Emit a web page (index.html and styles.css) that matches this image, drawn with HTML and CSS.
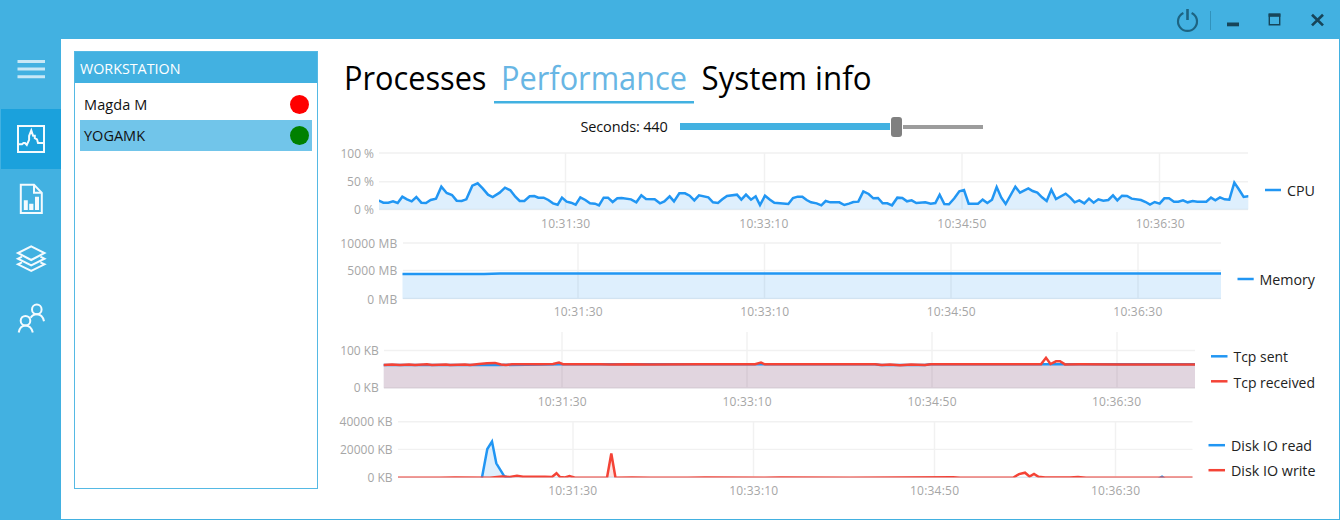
FILE: index.html
```html
<!DOCTYPE html>
<html lang="en">
<head>
<meta charset="utf-8">
<title>Workstation monitor</title>
<link rel="stylesheet" href="styles.css">
</head>
<body>
<div class="window">
  <header class="titlebar">
    <svg width="160" height="39" viewBox="1170 0 160 39">
      <g fill="none" stroke="#1d6482" stroke-width="2.2"><path d="M1183.4 12.9A9.5 9.5 0 1 0 1191.6 12.9"/><path d="M1187.5 9V20" stroke-width="2.6"/></g>
      <path d="M1210.5 11V30" stroke="#3192bb" fill="none"/>
      <path d="M1227 22.5h12v3.8h-12z" fill="#174559"/>
      <path d="M1269.3 14.3h10.4v10.4h-10.4z" fill="none" stroke="#174559" stroke-width="1.4"/>
      <path d="M1268.6 13.6h11.8v3.2h-11.8z" fill="#174559"/>
      <path d="M1312 14.8l11 10.6M1323 14.8l-11 10.6" fill="none" stroke="#174559" stroke-width="2.7"/>
    </svg>
  </header>
  <nav class="sidebar">
    <a class="item"><svg viewBox="0 0 60 60"><path d="M16.5 22.5h27.5M16.5 30.1h27.5M16.5 37.7h27.5" stroke="#c8e8f6" stroke-width="3"/></svg></a>
    <a class="item active"><svg viewBox="0 0 60 60"><path d="M17 17h26v26H17z"/><path d="M18 35.3h3l1.5-1.3h1.5l1.8 2 2.3-5.2V27l2.2-5.5 1.8 5.3h1.7v2.3l2.2 1.2 1 3.7h5"/></svg></a>
    <a class="item"><svg viewBox="0 0 60 60"><path d="M19.8 15.8H33l7.8 8v20.3h-21z"/><path d="M33 15.8v8h7.8"/><path class="solid" d="M22.8 31.3h4v9.7h-4zM28.2 34.8h4.2v6.2h-4.2zM34 27.7h4v13.3h-4z"/></svg></a>
    <a class="item"><svg viewBox="0 0 60 60"><path d="M30.2 17.3l13.3 6.7-13.3 7-13.3-7z"/><path d="M21 27.6l-4.1 2.1 13.3 6.7 13.3-6.7-4.1-2.1M21 33.3l-4.1 2 13.3 6.7 13.3-6.7-4.1-2"/></svg></a>
    <a class="item"><svg viewBox="0 0 60 60"><circle cx="35.8" cy="20.4" r="4.8"/><circle cx="24.5" cy="31.7" r="4.8"/><path d="M17.7 43.5q1.3-7 6.8-7t7.3 7M29.6 28.7q2.2-3.5 6.2-3.5 5.7 0 7.2 7"/></svg></a>
  </nav>
  <main class="content">
    <section class="list">
      <h2 class="list-head">WORKSTATION</h2>
      <div class="rows">
        <div class="row"><span class="magda">Magda M</span><i class="dot red"></i></div>
        <div class="row selected"><span class="yoga">YOGAMK</span><i class="dot green"></i></div>
      </div>
    </section>
    <section class="panel">
      <div class="tabs">
        <svg width="640" height="54" viewBox="335 51 640 54">
          <text x="344" y="90.4" textLength="142.5" lengthAdjust="spacingAndGlyphs">Processes</text>
          <text class="current" x="501" y="90.4" textLength="186" lengthAdjust="spacingAndGlyphs">Performance</text>
          <text x="701.5" y="90.4" textLength="170" lengthAdjust="spacingAndGlyphs">System info</text>
          <path d="M494 101h200v2.5H494z" fill="#42b1e1"/>
        </svg>
      </div>
      <div class="seconds">
        <span class="seconds-label">Seconds: 440</span>
        <div class="slider"><i class="done"></i><i class="thumb"></i><i class="rest"></i></div>
      </div>

      <svg class="chart" viewBox="335 145 995 90" height="90">
        <clipPath id="cpu-plot"><path d="M379 145H1248.3V209.6H379z"/></clipPath>
        <path class="grid" d="M379 153H1248M379 181.8H1248M379 209.5H1248M565.5 153V209M764.5 153V209M962 153V209M1159.5 153V209"/>
        <g clip-path="url(#cpu-plot)"><g transform="translate(335 145) scale(.33333)">
          <path class="blue filled" d="M120 206V167H132L145 173 160 173 174 169 188 174 202 155 216 163 230 169 244 156 259 173 273 174 287 165 303 161 319 125 335 144 351 150 365 167 380 168 394 163 412 122 428 115 443 130 459 149 473 156 494 143 510 128 526 136 541 155 554 168 568 168 584 154 598 153 610 158 626 158 640 165 654 175 668 179 681 158 695 170 708 173 722 179 736 157 751 165 765 175 780 176 792 181 806 158 819 158 833 171 847 160 860 159 888 163 904 172 919 151 933 162 959 163 975 175 988 169 1004 154 1017 169 1033 145 1050 145 1064 152 1078 166 1092 151 1120 157 1134 172 1149 174 1162 163 1176 153 1206 149 1219 164 1233 149 1248 164 1262 154 1275 180 1290 152 1305 164 1318 173 1360 177 1374 159 1388 155 1402 155 1415 165 1428 172 1445 175 1459 181 1472 168 1486 172 1513 172 1528 180 1542 176 1555 171 1570 170 1585 139 1601 147 1615 160 1629 159 1643 175 1657 175 1671 181 1687 158 1702 159 1716 169 1730 166 1744 174 1771 172 1787 176 1801 174 1814 149 1828 177 1842 178 1858 160 1873 139 1887 135 1901 176 1929 176 1943 164 1957 174 1971 164 1985 126 1999 158 2012 177 2041 125 2055 143 2080 130 2093 138 2107 143 2121 157 2135 168 2149 134 2163 162 2192 146 2206 158 2219 172 2233 166 2248 175 2262 161 2276 173 2290 163 2305 167 2320 165 2334 151 2347 166 2361 152 2376 153 2390 161 2418 165 2432 171 2445 179 2459 171 2474 176 2488 160 2502 160 2517 170 2530 170 2544 166 2558 172 2573 168 2587 170 2614 170 2628 158 2641 166 2655 157 2669 163 2683 164 2698 113 2711 132 2726 156 2739 154H2751V206Z"/>
        </g></g>
        <g class="axis end"><text x="374" y="157.6" textLength="33.5">100 %</text><text x="374" y="186" textLength="27">50 %</text><text x="374" y="214" textLength="20">0 %</text></g>
        <g class="axis"><text x="565.6" y="227.6" textLength="49">10:31:30</text><text x="763.8" y="227.6" textLength="49">10:33:10</text><text x="961.8" y="227.6" textLength="49">10:34:50</text><text x="1160.2" y="227.6" textLength="49">10:36:30</text></g>
        <path class="blue" d="M1265 190H1281"/>
        <text class="legend" x="1287" y="196" textLength="28" lengthAdjust="spacingAndGlyphs">CPU</text>
      </svg>

      <svg class="chart" viewBox="335 235 995 90" height="90">
        <path class="grid" d="M403 243H1221M403 270.5H1221M403 298.5H1221M578 243V298M764.5 243V298M951 243V298M1138 243V298"/>
        <path class="blue-area" d="M402.5 273.7H1221V299H402.5z"/>
        <path class="blue" d="M402.5 273.9H484L500 273.5H1221"/>
        <g class="axis end"><text x="397.2" y="247.6" textLength="57">10000 MB</text><text x="397.2" y="275.3" textLength="50">5000 MB</text><text x="397.2" y="304" textLength="30">0 MB</text></g>
        <g class="axis"><text x="578.2" y="316.3" textLength="49">10:31:30</text><text x="764.7" y="316.3" textLength="49">10:33:10</text><text x="951.2" y="316.3" textLength="49">10:34:50</text><text x="1137.8" y="316.3" textLength="49">10:36:30</text></g>
        <path class="blue" d="M1237.5 279H1253.7"/>
        <text class="legend" x="1259.5" y="285" textLength="55.5" lengthAdjust="spacingAndGlyphs">Memory</text>
      </svg>

      <svg class="chart" viewBox="335 325 995 89" height="89">
        <path class="grid" d="M384 350.5H1195M384 388H1195M562 332V388M747 332V388M932 332V388M1117 332V388"/>
        <path class="blue-area" d="M383.7 364.7L562 364.3H1195V388.3H383.7z"/>
        <path class="red-area" d="M383.7 364.7L562 364.3H1195V388.3H383.7z"/>
        <path class="blue" d="M383.7 365H500L562 364.2H875L880 365H925L930 364.2H1195"/>
        <path class="red" d="M383.7 365L392 364.6 400 365 409 364.4 415 365 427 364.3 432 365 446 364.4 450 365 465 364.4 470 365 479 364 487 363.3 495 362.9 501 364.5 506 365.1 512 364.2 540 364.2 553 364 559 362.6 563 364.2H600L610 364.5 630 364.2 650 364.5 700 364.2 755 364.3 761 362.6 765 364.3 875 364.2 882 365.1 890 364.5 900 365.2 911 364.5 925 365 931 364.3H1041L1046 357.8 1050.5 364 1056 361.3H1060L1065 364.4 1080 364.2 1120 364.4 1195 364.5"/>
        <g class="axis end"><text x="378.7" y="354.8" textLength="38.5">100 KB</text><text x="378.7" y="392.3" textLength="25">0 KB</text></g>
        <g class="axis"><text x="562.2" y="406.3" textLength="49">10:31:30</text><text x="747" y="406.3" textLength="49">10:33:10</text><text x="932" y="406.3" textLength="49">10:34:50</text><text x="1116.5" y="406.3" textLength="49">10:36:30</text></g>
        <path class="blue" d="M1211 356.3H1227.5"/><path class="red" d="M1211 381.3H1227.5"/>
        <text class="legend" x="1233.5" y="362.4" textLength="54.5" lengthAdjust="spacingAndGlyphs">Tcp sent</text>
        <text class="legend" x="1233.5" y="387.6" textLength="81.5" lengthAdjust="spacingAndGlyphs">Tcp received</text>
      </svg>

      <svg class="chart" viewBox="335 414 995 90" height="90">
        <clipPath id="disk-plot"><path d="M398 414H1193V477.6H398z"/></clipPath>
        <path class="grid" d="M398 421.7H1192.5M398 449.4H1192.5M398 477H1192.5M573 422V477M753.5 422V477M934.5 422V477M1115.5 422V477"/>
        <g clip-path="url(#disk-plot)">
          <path class="blue-area" d="M481.7 478L487.3 449 492 441.5 496.3 463.3 504.3 476.5 507 478z"/>
          <path class="blue" d="M398 479H481.7L487.3 449 492 441.5 496.3 463.3 504.3 476.3 512 479H1158L1162 476.8 1165 479H1192.5"/>
          <path class="red-area" d="M607.3 477L611.3 453.5 615.5 477z"/>
          <path class="red" d="M398 477.8H440L455 477.5 490 477.8 502 476.6 510 477 517 475.7 523 476.8H545L552 477 556.5 473.2 560 477 565 477.5 569.5 476.1 575 477.7H607L611.3 453.5 615.5 477.7 632 477.5 650 477.8H688L705 477.4 765 477.7 780 477.4 850 477.7 953 477.2 960 477.7H1013L1019 474.1 1025 472.7 1029.5 476.5 1034 473.9 1038.5 476.7 1045 477.6H1070L1078 477 1086 477.8H1192.5"/>
        </g>
        <g class="axis end"><text x="392.5" y="426" textLength="53">40000 KB</text><text x="392.5" y="453.8" textLength="52.5">20000 KB</text><text x="392.5" y="482.3" textLength="25">0 KB</text></g>
        <g class="axis"><text x="572.7" y="495" textLength="49">10:31:30</text><text x="753.7" y="495" textLength="49">10:33:10</text><text x="934.5" y="495" textLength="49">10:34:50</text><text x="1115.5" y="495" textLength="49">10:36:30</text></g>
        <path class="blue" d="M1208.5 445.2H1225"/><path class="red" d="M1208.5 470.2H1225"/>
        <text class="legend" x="1231" y="451" textLength="81" lengthAdjust="spacingAndGlyphs">Disk IO read</text>
        <text class="legend" x="1231" y="476" textLength="84.5" lengthAdjust="spacingAndGlyphs">Disk IO write</text>
      </svg>
    </section>
  </main>
</div>
</body>
</html>
```
FILE: styles.css
```css
* { box-sizing: border-box; }
body { margin: 0; font-family: "Open Sans", "Noto Sans", sans-serif; color: #111; }
.window { width: 1340px; height: 520px; background: #42b1e1; display: grid; grid-template: 39px 1fr / 61px 1fr; overflow: hidden; }
.titlebar { grid-column: 1 / 3; display: flex; justify-content: flex-end; padding-right: 10px; }
.sidebar { display: flex; flex-direction: column; padding-left: 1px; }
.item { height: 60px; flex: none; }
.item:first-child { height: 70px; }
.item svg { display: block; width: 60px; height: 60px; fill: none; stroke: #f4fbfe; stroke-width: 2; }
.item .solid { fill: #f4fbfe; stroke: none; }
.active { background: #1ba1dc; }
.content { background: #fff; margin: 0 1px 1px 0; display: flex; align-items: flex-start; padding-top: 12px; }
.list { width: 244px; height: 438px; margin-left: 13px; flex: none; border: 1px solid #55b9e4; }
.list-head { margin: 0; height: 31px; line-height: 33px; padding-left: 5px; background: #42b1e1; color: #fff; font-size: 14.3px; font-weight: 400; letter-spacing: 0; }
.rows { padding: 6px 5px; }
.row { height: 31px; display: flex; align-items: center; justify-content: space-between; padding: 0 3px 0 4px; font-size: 14.5px; white-space: nowrap; }
.selected { background: #71c5ea; }
.magda { letter-spacing: .1px; }
.yoga { letter-spacing: 0; }
.dot { width: 19px; height: 19px; border-radius: 50%; }
.red.dot { background: #f00; }
.green.dot { background: #008000; }
.panel { margin-left: 17px; width: 995px; flex: none; }
.tabs { height: 54px; font-size: 33.5px; }
.tabs svg { display: block; }
.tabs .current { fill: #68b6e4; }
.seconds { height: 40px; display: flex; align-items: center; padding: 3px 0 0 245.5px; }
.seconds-label { width: 99.5px; font-size: 14.5px; letter-spacing: -.15px; white-space: nowrap; flex: none; }
.slider { display: flex; align-items: center; }
.done { width: 210px; height: 6.5px; background: #42b1e1; }
.thumb { width: 10.5px; height: 20px; margin: 0 1.5px 0 1px; border-radius: 3px; background: #808080; }
.rest { width: 80px; height: 4px; background: #9c9c9c; }
.chart { display: block; width: 995px; }
.grid { fill: none; stroke: #f1f1f1; stroke-width: 1.4; }
.blue, .red { fill: none; stroke: #2196f3; stroke-width: 2.5; vector-effect: non-scaling-stroke; }
.blue.filled { fill: #2196f3; fill-opacity: .15; }
.chart .red { stroke: #f44336; }
.blue-area { fill: #2196f3; fill-opacity: .15; }
.red-area { fill: #f44336; fill-opacity: .15; }
.axis { font-size: 12px; fill: #a6a6a6; text-anchor: middle; }
.axis.end { text-anchor: end; }
.legend { font-size: 14.5px; fill: #222; }
```
